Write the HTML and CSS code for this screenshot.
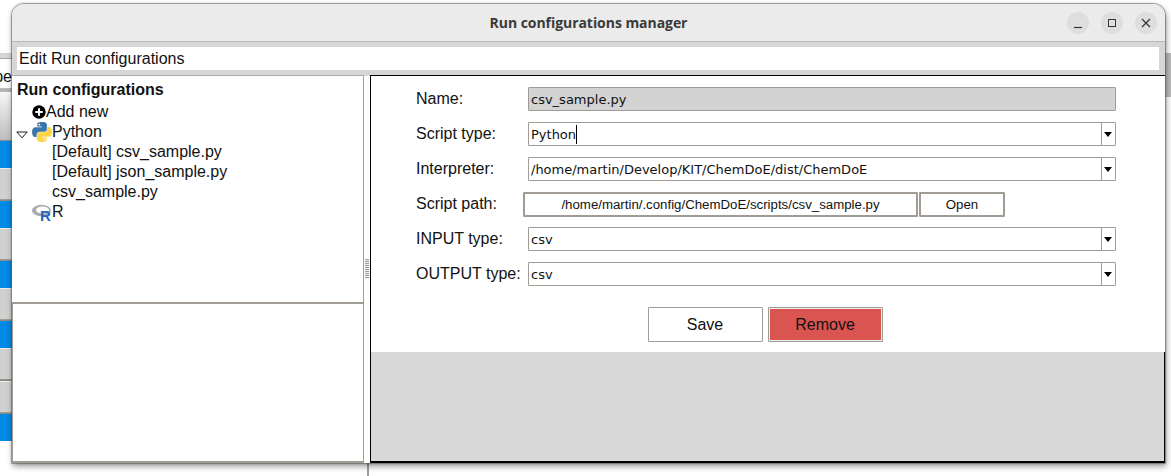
FILE: index.html
```html
<!DOCTYPE html>
<html lang="en">
<head>
    <meta charset="UTF-8">
    <meta name="viewport" content="width=device-width, initial-scale=1.0">
    <title>Run configurations manager</title>
    <link rel="stylesheet" href="styles.css">
</head>
<body>
    <!-- what shows behind the dialog -->
    <div class="desktop">
        <div class="strip">
            <div class="band band-top"></div>
            <div class="band-text">pe</div>
            <div class="band band-fade"></div>
            <div class="band band-blue"></div>
            <div class="band band-gray"></div>
            <div class="band band-blue"></div>
            <div class="band band-gray"></div>
            <div class="band band-blue"></div>
            <div class="band band-gray"></div>
            <div class="band band-blue"></div>
            <div class="band band-gray band-rule"></div>
            <div class="band band-gray"></div>
            <div class="band band-blue"></div>
        </div>
        <div class="stub"></div>
        <div class="strip-right"></div>
    </div>

    <div class="window">
        <div class="titlebar">
            <span class="title">Run configurations manager</span>
            <div class="win-buttons">
                <span class="win-btn">
                    <svg width="12" height="12" viewBox="0 0 12 12"><path d="M2 10.5h8" stroke="#333" stroke-width="1.2" fill="none"/></svg>
                </span>
                <span class="win-btn">
                    <svg width="12" height="12" viewBox="0 0 12 12"><rect x="2.5" y="2.5" width="7" height="7" stroke="#333" stroke-width="1" fill="none"/></svg>
                </span>
                <span class="win-btn">
                    <svg width="12" height="12" viewBox="0 0 12 12"><path d="M2 2l8 8M10 2l-8 8" stroke="#333" stroke-width="1.2" fill="none"/></svg>
                </span>
            </div>
        </div>

        <div class="header">
            <div class="header-field">Edit Run configurations</div>
        </div>

        <div class="main">
            <div class="left">
                <div class="tree">
                    <div class="tree-title">Run configurations</div>
                    <div class="tree-row indent-1">
                        <svg class="icon-add" width="14" height="14" viewBox="0 0 15 15">
                            <circle cx="7.5" cy="7.5" r="7.2" fill="#000"/>
                            <path d="M7.5 3.5v8M3.5 7.5h8" stroke="#fff" stroke-width="2.2"/>
                        </svg>
                        <span>Add new</span>
                    </div>
                    <div class="tree-row indent-0">
                        <svg class="twisty" width="12" height="8" viewBox="0 0 12 8"><path d="M.8 1h10.4L6 6.8z" fill="#fff" stroke="#000" stroke-width=".9"/></svg>
                        <svg class="icon-lang" width="20" height="20" viewBox="0 0 110 110">
                            <g>
                                <path fill="#3a76a8" d="M54.9 0C50.3 0 45.9.4 42.1 1.1 30.8 3.1 28.8 7.2 28.8 14.9V25h26.5v3.4H18.9C11.2 28.4 4.4 33 2.3 41.8-.1 51.9-.2 58.2 2.3 68.8 4.2 76.6 8.7 82.2 16.4 82.2h9.1V70.1c0-8.7 7.6-16.4 16.6-16.4h26.5c7.4 0 13.3-6.1 13.3-13.5V14.9c0-7.2-6.1-12.6-13.3-13.8C64 .3 59.2 0 54.9 0z"/>
                                <circle cx="40" cy="14" r="5" fill="#fff"/>
                            </g>
                            <g transform="rotate(180 55 55)">
                                <path fill="#fdd444" d="M54.9 0C50.3 0 45.9.4 42.1 1.1 30.8 3.1 28.8 7.2 28.8 14.9V25h26.5v3.4H18.9C11.2 28.4 4.4 33 2.3 41.8-.1 51.9-.2 58.2 2.3 68.8 4.2 76.6 8.7 82.2 16.4 82.2h9.1V70.1c0-8.7 7.6-16.4 16.6-16.4h26.5c7.4 0 13.3-6.1 13.3-13.5V14.9c0-7.2-6.1-12.6-13.3-13.8C64 .3 59.2 0 54.9 0z"/>
                                <circle cx="40" cy="14" r="5" fill="#fff"/>
                            </g>
                        </svg>
                        <span>Python</span>
                    </div>
                    <div class="tree-row indent-2">[Default] csv_sample.py</div>
                    <div class="tree-row indent-2">[Default] json_sample.py</div>
                    <div class="tree-row indent-2">csv_sample.py</div>
                    <div class="tree-row indent-1">
                        <svg class="icon-lang" width="20" height="20" viewBox="0 0 20 20">
                            <ellipse cx="9.5" cy="8.5" rx="9.5" ry="5.8" fill="#a9abb0"/>
                            <ellipse cx="10.5" cy="8" rx="6.5" ry="3.5" fill="#fff"/>
                            <text x="8" y="18.5" class="r-mark">R</text>
                        </svg>
                        <span>R</span>
                    </div>
                </div>
                <div class="tree-detail"></div>
            </div>

            <div class="splitter"><span class="grip"></span></div>

            <div class="right">
                <div class="form">
                    <div class="form-row">
                        <label class="form-label">Name:</label>
                        <div class="field field-disabled">csv_sample.py</div>
                    </div>
                    <div class="form-row">
                        <label class="form-label">Script type:</label>
                        <div class="field">
                            <span class="field-text">Python<span class="caret"></span></span>
                            <span class="combo-arrow"></span>
                        </div>
                    </div>
                    <div class="form-row">
                        <label class="form-label">Interpreter:</label>
                        <div class="field">
                            <span class="field-text">/home/martin/Develop/KIT/ChemDoE/dist/ChemDoE</span>
                            <span class="combo-arrow"></span>
                        </div>
                    </div>
                    <div class="form-row form-row-path">
                        <label class="form-label">Script path:</label>
                        <button class="btn-path" type="button">/home/martin/.config/ChemDoE/scripts/csv_sample.py</button>
                        <button class="btn-open" type="button">Open</button>
                    </div>
                    <div class="form-row">
                        <label class="form-label">INPUT type:</label>
                        <div class="field">
                            <span class="field-text">csv</span>
                            <span class="combo-arrow"></span>
                        </div>
                    </div>
                    <div class="form-row">
                        <label class="form-label">OUTPUT type:</label>
                        <div class="field">
                            <span class="field-text">csv</span>
                            <span class="combo-arrow"></span>
                        </div>
                    </div>
                    <div class="actions">
                        <button class="btn" type="button">Save</button>
                        <button class="btn btn-remove" type="button">Remove</button>
                    </div>
                </div>
                <div class="right-empty"></div>
            </div>
        </div>
    </div>
</body>
</html>
```

FILE: styles.css
```css
html, body {
    margin: 0;
    height: 476px;
    overflow: hidden;
    background-color: white;
    font-family: "Liberation Sans", Arial, sans-serif;
    font-size: 16px;
    color: #111;
}

/* background behind the dialog */
.desktop {
    display: flex;
    height: 476px;
}
.strip {
    width: 12px;
    display: flex;
    flex-direction: column;
    padding-top: 53px;
    flex: none;
}
.band {
    flex: none;
}
.band-top {
    height: 5px;
    background-color: #d6d6d6;
    border-bottom: 1px solid #aaa;
}
.band-text {
    height: 29px;
    line-height: 36px;
    margin-left: -12px;
    overflow: hidden;
    text-align: right;
    border-bottom: 1px solid #bbb;
}
.band-fade {
    height: 48px;
    border-top: 3px solid #b5b3ae;
    background: linear-gradient(#f6f6f6, #bdbdbd);
}
.band-blue {
    height: 27px;
    background-color: #0089e5;
    border-top: 1px solid #8e8c86;
}
.band-gray {
    height: 30px;
    background-color: #d0d0d0;
    border-top: 1px solid #eee;
    border-bottom: 1px solid #a09c94;
}
.band-rule {
    border-bottom: 2px solid #8e8c86;
}
.stub {
    width: 2px;
    height: 13px;
    margin: 463px 0 0 355px;
    background-color: #a09c94;
    flex: none;
}
.strip-right {
    width: 7px;
    height: 44px;
    margin: 53px 0 0 auto;
    background-color: #bdbdbd;
    flex: none;
}

/* dialog */
.window {
    position: absolute;
    left: 12px;
    top: 4px;
    width: 1153px;
    height: 459px;
    display: flex;
    flex-direction: column;
    background-color: white;
    border-radius: 12px 12px 0 0;
    box-shadow: 0 0 1px 1px rgba(90, 90, 90, 0.6), 1px 3px 6px rgba(0, 0, 0, 0.45);
}
.titlebar {
    height: 37px;
    flex: none;
    display: flex;
    align-items: center;
    justify-content: center;
    position: relative;
    background-color: #ebebeb;
    border-radius: 12px 12px 0 0;
    border-bottom: 1px solid #b8b8b8;
}
.title {
    font-family: "Open Sans", sans-serif;
    font-weight: 700;
    font-size: 14px;
    letter-spacing: -0.05px;
    color: #3a3a3a;
}
.win-buttons {
    position: absolute;
    right: 8px;
    top: 8px;
    display: flex;
    gap: 12px;
}
.win-btn {
    width: 22px;
    height: 22px;
    border-radius: 50%;
    background-color: #dedede;
    display: flex;
    align-items: center;
    justify-content: center;
}
.header {
    height: 33px;
    flex: none;
    box-sizing: border-box;
    padding: 5px 6px 5px 5px;
    background-color: #d6d6d6;
}
.header-field {
    height: 23px;
    line-height: 23px;
    padding-left: 2px;
    background-color: white;
}
.main {
    flex: 1;
    display: flex;
    min-height: 0;
}

/* left side: tree */
.left {
    width: 352px;
    flex: none;
    display: flex;
    flex-direction: column;
    box-sizing: border-box;
    border-top: 1px solid #aaa;
    border-right: 1px solid #a09c94;
    border-bottom: 2px solid #a09c94;
}
.tree {
    height: 228px;
    flex: none;
    padding: 4px 0 0 5px;
    box-sizing: border-box;
    border-bottom: 2px solid #a09c94;
}
.tree-title {
    font-weight: 700;
    height: 20px;
    line-height: 20px;
    margin-bottom: 2px;
}
.tree-row {
    height: 20px;
    line-height: 20px;
    display: flex;
    align-items: center;
    white-space: nowrap;
}
.indent-0 {
    padding-left: 0;
}
.indent-1 {
    padding-left: 15px;
}
.indent-2 {
    padding-left: 35px;
}
.twisty {
    margin: 5px 4px 0 -1px;
    flex: none;
}
.icon-add,
.icon-lang {
    flex: none;
}
.r-mark {
    font-family: "Liberation Sans", sans-serif;
    font-weight: 700;
    font-size: 15px;
    fill: #2566b8;
}
.tree-detail {
    flex: 1;
    border-left: 1px solid #a09c94;
}
.splitter {
    width: 6px;
    flex: none;
    position: relative;
    border-top: 1px solid #d6d6d6;
}
.grip {
    position: absolute;
    left: 1px;
    top: 183px;
    width: 4px;
    height: 20px;
    background: repeating-linear-gradient(#a09c94 0 1px, #eee 1px 2px);
}

/* right side: form */
.right {
    flex: 1;
    display: flex;
    flex-direction: column;
    border-top: 1px solid #000;
    border-left: 1px solid #000;
    border-bottom: 2px solid #000;
    min-width: 0;
}
.form {
    height: 276px;
    flex: none;
    box-sizing: border-box;
    padding: 11px 49px 0 45px;
    display: flex;
    flex-direction: column;
    gap: 11px;
}
.right-empty {
    flex: 1;
    background-color: #d8d8d8;
    border-right: 1px solid #000;
}
.form-row {
    display: flex;
    align-items: center;
    height: 24px;
    flex: none;
}
.form-label {
    width: 112px;
    flex: none;
    white-space: nowrap;
}
.field {
    flex: 1;
    height: 24px;
    box-sizing: border-box;
    display: flex;
    align-items: center;
    border: 1px solid #a09c94;
    border-radius: 1px;
    font-family: "DejaVu Sans", sans-serif;
    font-size: 13px;
    padding-left: 2px;
}
.field-disabled {
    background-color: #d3d3d3;
}
.field-text {
    flex: 1;
    display: flex;
    align-items: center;
    white-space: nowrap;
}
.caret {
    display: inline-block;
    width: 1px;
    height: 19px;
    background-color: #000;
}
.combo-arrow {
    width: 13px;
    height: 22px;
    flex: none;
    position: relative;
    border-left: 1px solid #a09c94;
}
.combo-arrow::after {
    content: "";
    position: absolute;
    left: 2px;
    top: 9px;
    width: 0;
    height: 0;
    border-top: 5px solid #000;
    border-left: 4px solid transparent;
    border-right: 4px solid transparent;
}
.form-row-path .form-label {
    width: 107px;
}
.btn-path,
.btn-open {
    height: 25px;
    box-sizing: border-box;
    background-color: white;
    border: 2px solid #a09c94;
    border-radius: 1px;
    font-family: "Liberation Sans", sans-serif;
    font-size: 13.25px;
    color: #111;
    padding: 0;
    flex: none;
    align-self: flex-start;
}
.btn-path {
    width: 395px;
}
.btn-open {
    width: 86px;
    margin-left: 1px;
}
.actions {
    display: flex;
    justify-content: center;
    gap: 5px;
    margin: 10px 0 0 -2px;
}
.btn {
    width: 115px;
    height: 35px;
    box-sizing: border-box;
    background-color: white;
    border: 1px solid #a09c94;
    border-radius: 1px;
    font-family: "Liberation Sans", sans-serif;
    font-size: 16px;
    color: #111;
    padding: 0;
}
.btn-remove {
    background-color: #da5451;
    box-shadow: inset 0 0 0 1px #eee;
}
```
